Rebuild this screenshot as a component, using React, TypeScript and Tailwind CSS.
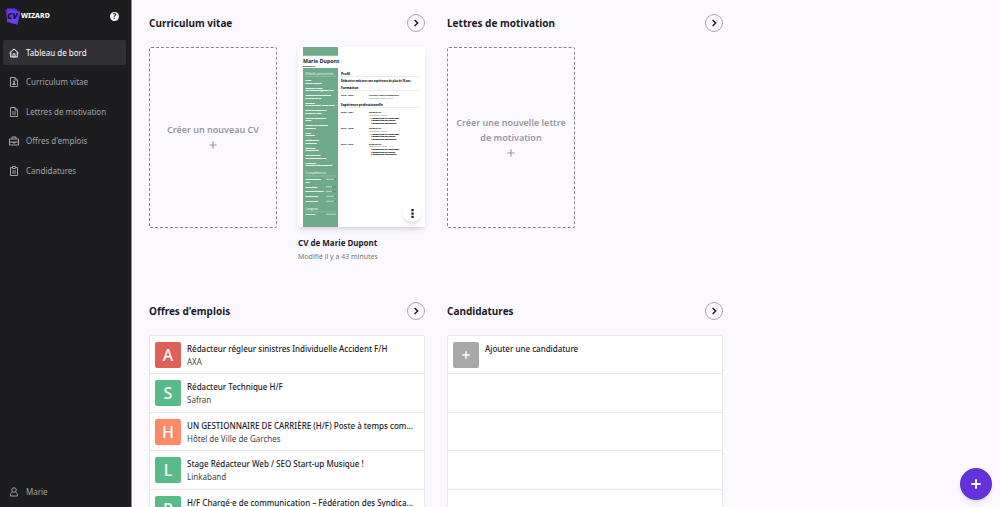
import type { ReactNode } from 'react';
import clsx from 'clsx';

interface NavEntry {
  label: string;
  icon: ReactNode;
  active?: boolean;
}

interface JobOffer {
  initial: string;
  title: string;
  company: string;
  color: string;
}

const OFFERS: JobOffer[] = [
  { initial: 'A', title: 'Rédacteur régleur sinistres Individuelle Accident F/H', company: 'AXA', color: 'bg-[#e05f56]' },
  { initial: 'S', title: 'Rédacteur Technique H/F', company: 'Safran', color: 'bg-[#57bb8a]' },
  { initial: 'H', title: 'UN GESTIONNAIRE DE CARRIÈRE (H/F) Poste à temps com...', company: 'Hôtel de Ville de Garches', color: 'bg-[#ff8a65]' },
  { initial: 'L', title: 'Stage Rédacteur Web / SEO Start-up Musique !', company: 'Linkaband', color: 'bg-[#57bb8a]' },
  { initial: 'P', title: 'H/F Chargé·e de communication – Fédération des Syndica...', company: '', color: 'bg-[#57bb8a]' },
];

function Icon({ children }: { children: ReactNode }) {
  return (
    <svg viewBox="0 0 20 20" className="size-[10px] shrink-0" fill="none" stroke="currentColor" strokeWidth="2" strokeLinejoin="round" aria-hidden="true">
      {children}
    </svg>
  );
}

const NAV: NavEntry[] = [
  {
    label: 'Tableau de bord',
    active: true,
    icon: (
      <Icon>
        <path d="M1 10 10 2l9 8M3.5 8.5V18h13V8.5M8 18v-5a2 2 0 0 1 4 0v5" />
      </Icon>
    ),
  },
  {
    label: 'Curriculum vitae',
    icon: (
      <Icon>
        <path d="M3 1h9l5 5v13H3zM12 1v5h5" />
        <circle cx="10" cy="9.5" r="1.5" fill="currentColor" />
        <path d="M7 15c0-3 6-3 6 0z" fill="currentColor" />
      </Icon>
    ),
  },
  {
    label: 'Lettres de motivation',
    icon: (
      <Icon>
        <path d="M3 1h9l5 5v13H3zM12 1v5h5M6 10h8M6 14h8" />
      </Icon>
    ),
  },
  {
    label: "Offres d'emplois",
    icon: (
      <Icon>
        <path d="M1 6h18v12H1zM6 6V2h8v4M1 12h18M8 12v2h4v-2" />
      </Icon>
    ),
  },
  {
    label: 'Candidatures',
    icon: (
      <Icon>
        <path d="M7 3H3v16h14V3h-4M7 1h6v4H7zM6 10h8M6 14h8" />
      </Icon>
    ),
  },
];

function Logo() {
  return (
    <a href="#" className="flex items-center" aria-label="CV Wizard">
      <svg viewBox="0 0 48 54" className="h-[18px] w-4" aria-hidden="true">
        <path d="M1 9 30 3l6 36-28 6z" fill="#5a2fd6" />
        <path d="M6 4 36 7l-3 40-26-3z" fill="#6334e0" />
        <path d="m12 5 34 9-9 39-31-9z" fill="#6c3df0" />
        <path d="M12 5 46 14" stroke="#4a22b8" strokeWidth="1.5" />
        <text x="7" y="37" fontSize="25" fontWeight="800" fontStyle="italic" fontFamily="Open Sans, sans-serif" fill="#141418">
          CV
        </text>
      </svg>
      <span className="text-[7px] font-extrabold text-white">WIZARD</span>
    </a>
  );
}

function Sidebar() {
  return (
    <aside className="flex w-[132px] shrink-0 flex-col border-r border-[#8c8c90] bg-[#1d1d1f] px-[3px]">
      <div className="flex h-8 items-center justify-between pr-[9px] pl-[2px]">
        <Logo />
        <button type="button" aria-label="Aide" className="flex size-[9px] items-center justify-center rounded-full bg-white text-[8px] leading-none font-bold text-[#1d1d1f]">
          ?
        </button>
      </div>
      <nav className="mt-2 mr-[2px] flex h-[143px] flex-col justify-between">
        {NAV.map((entry) => (
          <a
            key={entry.label}
            href="#"
            className={clsx(
              'flex h-[25px] items-center gap-[7px] rounded-xs px-[6px] text-[8px]',
              entry.active ? 'bg-[#313135] text-white' : 'text-[#a3a3a8]',
            )}
          >
            {entry.icon}
            {entry.label}
          </a>
        ))}
      </nav>
      <a href="#" className="mt-auto mb-[3px] flex h-[25px] items-center gap-[7px] px-[6px] text-[8px] text-[#a3a3a8]">
        <Icon>
          <circle cx="10" cy="6" r="4.5" />
          <path d="M7 10c-3 1-4 4-4 8h14c0-4-1-7-4-8" />
        </Icon>
        Marie
      </a>
    </aside>
  );
}

function Section({ title, children }: { title: string; children: ReactNode }) {
  return (
    <section className="min-w-0">
      <header className="mb-[15px] flex h-[18px] items-center justify-between">
        <h2 className="text-[10px] font-bold text-[#1b1b1f]">{title}</h2>
        <button type="button" aria-label={`Voir ${title}`} className="flex size-[18px] items-center justify-center rounded-full border border-[#a9a9ae]">
          <svg viewBox="0 0 12 12" className="size-2" fill="none" stroke="#1b1b1f" strokeWidth="2.2" aria-hidden="true">
            <path d="m4 1.500 4.500 4.500L4 10.500" />
          </svg>
        </button>
      </header>
      {children}
    </section>
  );
}

function NewDocument({ label }: { label: string }) {
  return (
    <button type="button" className="flex h-[181px] w-32 flex-col items-center justify-center rounded-xs border border-dashed border-[#85858a] px-[7px] text-[9px] leading-[15px] font-semibold text-[#98989d]">
      {label}
      <svg viewBox="0 0 8 8" className="my-1 size-2" stroke="currentColor" strokeWidth="1.200" aria-hidden="true">
        <path d="M4 .5v7M.5 4h7" />
      </svg>
    </button>
  );
}

const DETAILS = [
  ['Nom', 'Marie Dupont'],
  ['Adresse e-mail', 'mariedupont@mail.com'],
  ['Numéro de téléphone', '06 00 00 00 00'],
  ['Adresse', '5 rue du port, 75000 Paris'],
  ['Date de naissance', '5 janvier 1990'],
  ['Lieu de naissance', 'Paris'],
  ['Permis de conduire', 'Permis B'],
  ['Sexe', 'Féminin'],
  ['Nationalité', 'Française'],
  ['État civil', 'Célibataire'],
  ['Site internet', 'mariedupont.com'],
  ['LinkedIn', 'linkedin.com/mdupont'],
];

const SKILLS = [
  { name: 'Optimisation', y: 532, level: 4 },
  { name: 'Rédaction', y: 562, level: 3 },
  { name: 'Microsoft Word', y: 581, level: 3 },
  { name: 'Photoshop', y: 600, level: 4 },
  { name: 'WordPress', y: 620, level: 4 },
  { name: 'Français', y: 672, level: 5 },
];

const JOBS = [
  { years: '2018 - 2021', y: 265 },
  { years: '2016 - 2018', y: 328 },
  { years: '2014 - 2016', y: 390 },
];

// Miniature of the first page, drawn at four units per pixel
function ResumePreview() {
  return (
    <svg viewBox="0 0 508 720" className="block h-full w-full" fontFamily="Open Sans, sans-serif" fontSize="9" fontWeight="800" aria-label="Aperçu du CV">
      <rect x="20" width="140" height="720" fill="#6faa8a" />
      <rect x="20" y="35" width="140" height="49" fill="#fff" />
      <text x="20" y="63" fontSize="21" fontWeight="700" fill="#1c1c1c">Marie Dupont</text>
      <text x="20" y="79" fill="#1c1c1c">Rédactrice</text>
      <g fill="#fff">
        <text x="30" y="110" fontSize="13" fontWeight="400">Détails personnels</text>
        <text x="30" y="508" fontSize="13" fontWeight="400">Compétences</text>
        <text x="30" y="651" fontSize="13" fontWeight="400">Langues</text>
        <path d="M30 118h122M30 516h122M30 659h122" stroke="#a9ccb9" strokeWidth="2" />
        <g stroke="#fff" strokeWidth=".7">
          {DETAILS.map(([label, value], i) => (
            <g key={label}>
              <text x="30" y={136 + i * 30}>{label}</text>
              <text x="30" y={146 + i * 30}>{value}</text>
            </g>
          ))}
          <text x="30" y="542">SEO</text>
          {SKILLS.map((skill) => (
            <text key={skill.name} x="30" y={skill.y}>{skill.name}</text>
          ))}
        </g>
        {SKILLS.map((skill) => (
          <g key={skill.name}>
            {[0, 1, 2, 3, 4].map((dot) => (
              <circle key={dot} cx={116 + dot * 8} cy={skill.y - 3} r="3" fill={dot < skill.level ? '#d5e7dc' : '#4c8768'} />
            ))}
          </g>
        ))}
      </g>
      <g fill="#1c1c1c">
        <text x="172" y="110" fontSize="13">Profil</text>
        <text x="172" y="140" fontSize="10">Rédactrice web avec une expérience de plus de 10 ans</text>
        <text x="172" y="166" fontSize="13">Formation</text>
        <text x="172" y="197">2010 - 2013</text>
        <text x="284" y="197">Licence Lettres Modernes</text>
        <text x="172" y="235" fontSize="12">Expérience professionnelle</text>
        <path d="M172 118h316M172 174h316M172 242h316" stroke="#d8d8d8" strokeWidth="2" />
        <text x="284" y="208" fontWeight="600" fill="#4c9a70">Université Paris, Paris</text>
        {JOBS.map((job) => (
          <g key={job.years}>
            <text x="172" y={job.y}>{job.years}</text>
            <text x="284" y={job.y}>Rédactrice</text>
            <text x="284" y={job.y + 11} fontWeight="600" fill="#4c9a70">Entreprise, Paris</text>
            <g stroke="#1c1c1c" strokeWidth=".5">
              <text x="292" y={job.y + 22}>• Rédaction de contenus</text>
              <text x="292" y={job.y + 32}>• Rédaction de fiches</text>
              <text x="292" y={job.y + 42}>• Rédaction optimisée</text>
            </g>
          </g>
        ))}
      </g>
    </svg>
  );
}

function ResumeCard() {
  return (
    <article className="min-w-0">
      <div className="relative h-[180px] rounded-xs bg-white shadow-md">
        <ResumePreview />
        <button type="button" aria-label="Options" className="absolute right-1 bottom-[5px] flex size-[18px] items-center justify-center rounded-full bg-white shadow-md">
          <svg viewBox="0 0 4 12" className="h-[9px] w-[3px]" fill="#1b1b1f" aria-hidden="true">
            <path d="M.5 0h3v3h-3zM.5 4.500h3v3h-3zM.5 9h3v3h-3z" />
          </svg>
        </button>
      </div>
      <h3 className="mt-2 text-[8px] leading-[15px] font-bold text-[#1b1b1f]">CV de Marie Dupont</h3>
      <p className="text-[7px] leading-[13px] text-[#77777c]">Modifié il y a 43 minutes</p>
    </article>
  );
}

function OfferRow({ offer }: { offer: JobOffer }) {
  return (
    <li className="flex min-h-0 min-w-0 gap-[6px] border-b border-[#e8e8eb] p-[6px] pl-[5px]">
      <span className={clsx('flex size-[26px] shrink-0 items-center justify-center rounded-xs text-base leading-none font-medium text-white', offer.color)}>
        {offer.initial}
      </span>
      <div className="min-w-0 text-[8px] leading-[13px]">
        <p className="truncate font-medium text-[#1b1b1f]">{offer.title}</p>
        <p className="truncate text-[#444448]">{offer.company}</p>
      </div>
    </li>
  );
}

export default function App() {
  return (
    <div className="flex h-screen overflow-hidden bg-[#fbf9ff] font-['Noto_Sans','Open_Sans',sans-serif]">
      <Sidebar />
      <main className="min-w-0 flex-1 overflow-hidden pt-[14px] pr-4 pl-[17px]">
        <div className="grid max-w-[574px] grid-cols-2 gap-x-[22px]">
          <Section title="Curriculum vitae">
            <div className="grid h-[255px] grid-cols-[128px_1fr] items-start gap-[21px]">
              <NewDocument label="Créer un nouveau CV" />
              <ResumeCard />
            </div>
          </Section>
          <Section title="Lettres de motivation">
            <NewDocument label="Créer une nouvelle lettre de motivation" />
          </Section>
          <Section title="Offres d'emplois">
            <ul className="grid h-[194px] grid-cols-1 grid-rows-5 rounded-xs border border-[#e8e8eb] bg-white">
              {OFFERS.map((offer) => (
                <OfferRow key={offer.title} offer={offer} />
              ))}
            </ul>
          </Section>
          <Section title="Candidatures">
            <ul className="grid h-[194px] grid-cols-1 grid-rows-5 rounded-xs border border-[#e8e8eb] bg-white">
              <li className="border-b border-[#e8e8eb]">
                <button type="button" className="flex w-full items-start gap-[6px] p-[6px] pl-[5px] text-left text-[8px] leading-[13px] font-medium text-[#1b1b1f]">
                  <span className="flex size-[26px] shrink-0 items-center justify-center rounded-xs bg-[#a8a8a8] text-white">
                    <svg viewBox="0 0 8 8" className="size-[10px]" stroke="currentColor" strokeWidth="1.200" aria-hidden="true">
                      <path d="M4 1v6M1 4h6" />
                    </svg>
                  </span>
                  Ajouter une candidature
                </button>
              </li>
              {[1, 2, 3, 4].map((row) => (
                <li key={row} className="border-b border-[#e8e8eb]" />
              ))}
            </ul>
          </Section>
        </div>
      </main>
      <button type="button" aria-label="Ajouter" className="fixed right-2 bottom-[7px] flex size-8 items-center justify-center rounded-full bg-[#6232dd] text-white shadow-md">
        <svg viewBox="0 0 10 10" className="size-[10px]" stroke="currentColor" strokeWidth="1.800" strokeLinecap="round" aria-hidden="true">
          <path d="M5 1v8M1 5h8" />
        </svg>
      </button>
    </div>
  );
}
